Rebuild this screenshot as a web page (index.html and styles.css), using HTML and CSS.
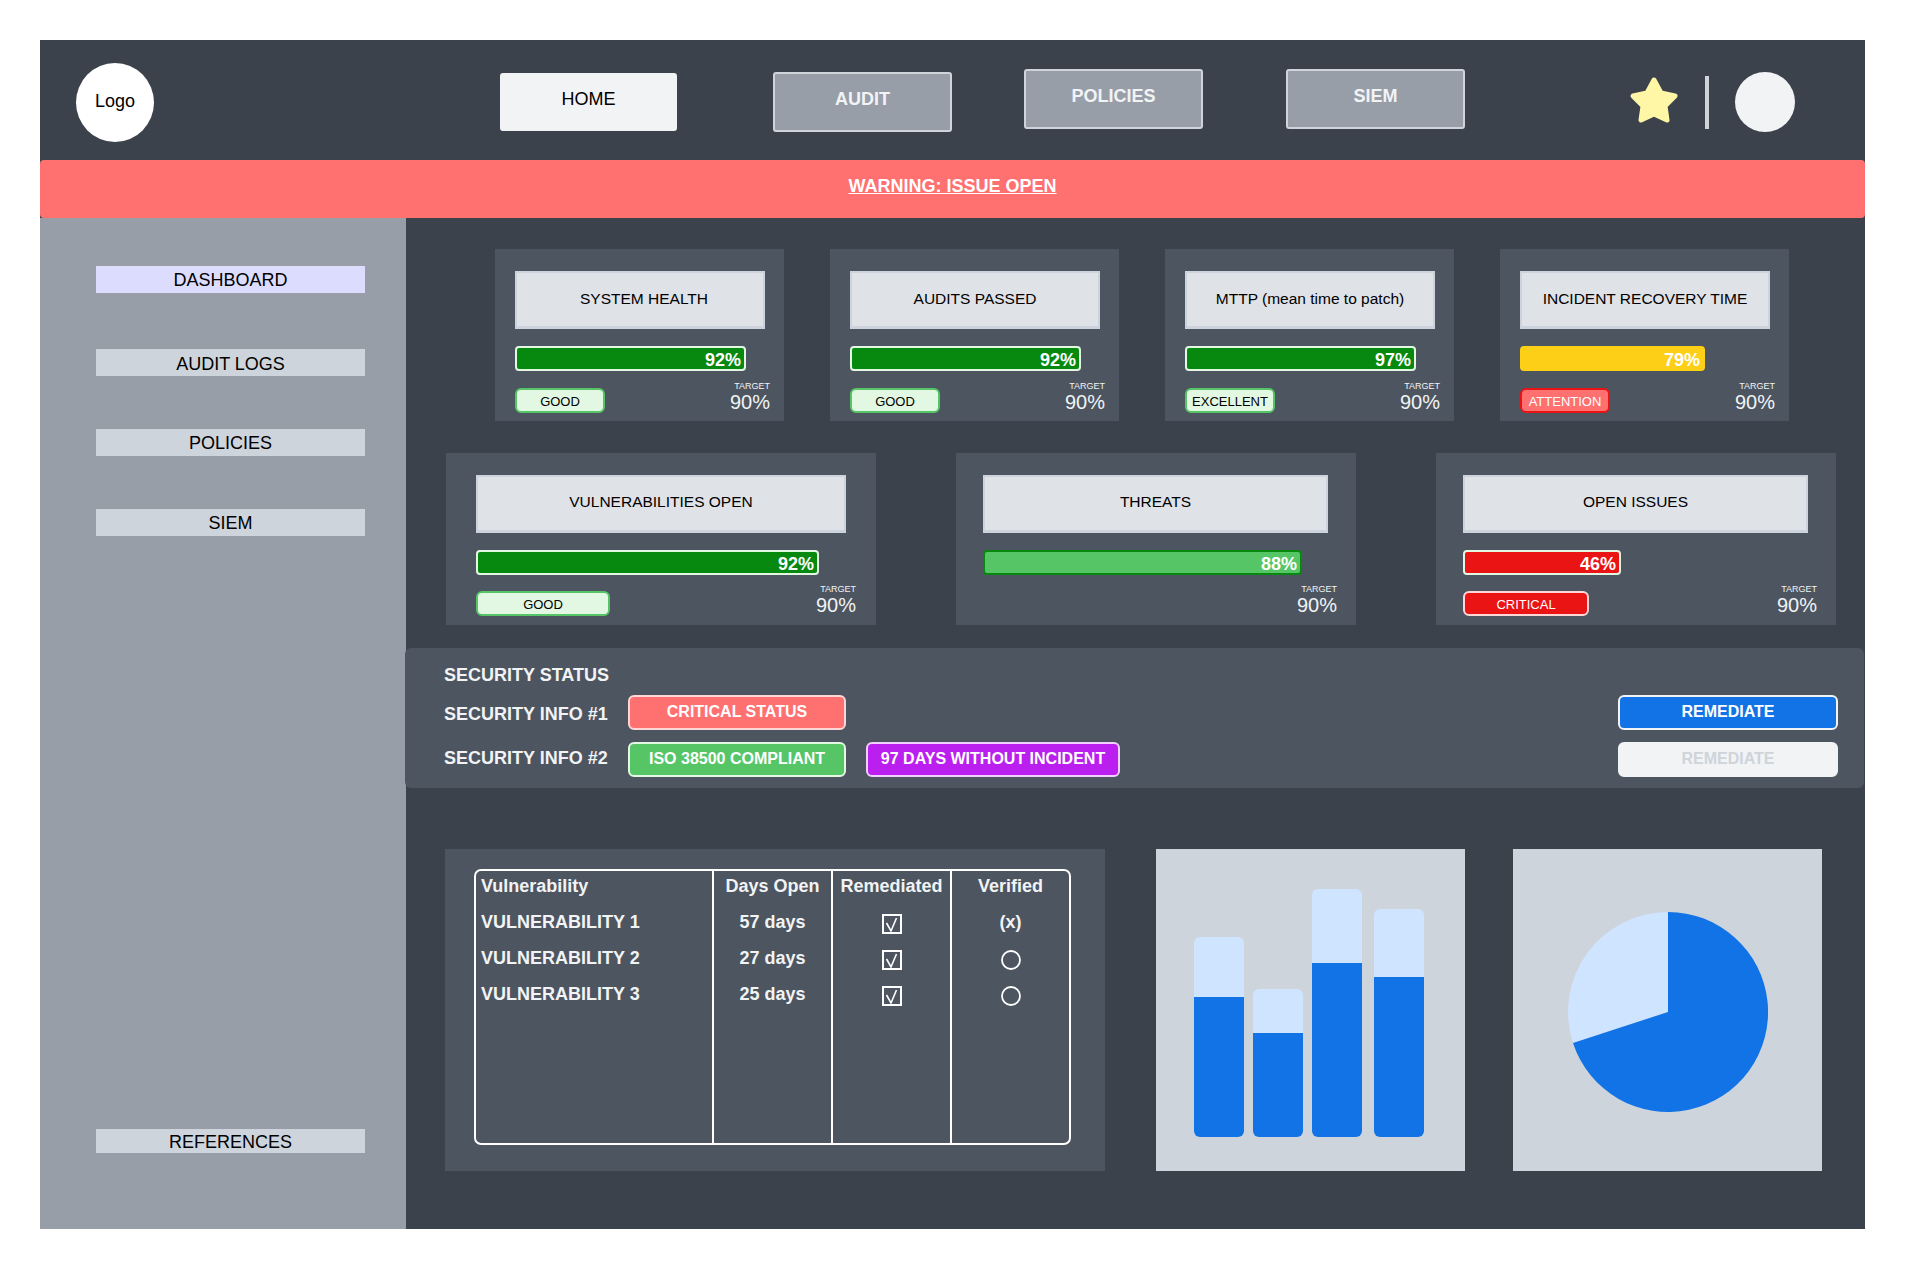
FILE: index.html
```html
<!DOCTYPE html>
<html lang="en">
<head>
  <meta charset="UTF-8">
  <meta name="viewport" content="width=device-width, initial-scale=1.0">
  <title>Security Dashboard</title>
  <link rel="stylesheet" href="styles.css">
</head>
<body>
  <div class="frame">
    <div class="header">
      <div class="logo">Logo</div>
      <a class="nav nav-home">HOME</a>
      <a class="nav nav-audit">AUDIT</a>
      <a class="nav nav-policies">POLICIES</a>
      <a class="nav nav-siem">SIEM</a>
      <svg class="star" width="50" height="48" viewBox="0 0 50 48">
        <polygon points="25,4 32,17 46,20 36,30 38,44 25,38 12,44 14,30 4,20 18,17" fill="#fff7a6" stroke="#fff7a6" stroke-width="5" stroke-linejoin="round"/>
      </svg>
      <div class="divider"></div>
      <div class="avatar"></div>
    </div>

    <div class="banner"><a>WARNING: ISSUE OPEN</a></div>

    <div class="main">
      <div class="sidebar">
        <a class="side-item side-active">DASHBOARD</a>
        <a class="side-item">AUDIT LOGS</a>
        <a class="side-item">POLICIES</a>
        <a class="side-item">SIEM</a>
        <a class="side-item side-refs">REFERENCES</a>
      </div>

      <div class="content">
        <div class="row-one">
          <div class="card">
            <div class="card-title title-system">SYSTEM HEALTH</div>
            <div class="bar bar-green" style="width: 231px">92%</div>
            <div class="card-foot">
              <span class="badge badge-good">GOOD</span>
              <div class="target"><small>TARGET</small>90%</div>
            </div>
          </div>
          <div class="card">
            <div class="card-title">AUDITS PASSED</div>
            <div class="bar bar-green" style="width: 231px">92%</div>
            <div class="card-foot">
              <span class="badge badge-good">GOOD</span>
              <div class="target"><small>TARGET</small>90%</div>
            </div>
          </div>
          <div class="card">
            <div class="card-title">MTTP (mean time to patch)</div>
            <div class="bar bar-green" style="width: 231px">97%</div>
            <div class="card-foot">
              <span class="badge badge-good">EXCELLENT</span>
              <div class="target"><small>TARGET</small>90%</div>
            </div>
          </div>
          <div class="card">
            <div class="card-title">INCIDENT RECOVERY TIME</div>
            <div class="bar bar-yellow" style="width: 185px">79%</div>
            <div class="card-foot">
              <span class="badge badge-attention">ATTENTION</span>
              <div class="target"><small>TARGET</small>90%</div>
            </div>
          </div>
        </div>

        <div class="row-two">
          <div class="card card-vuln">
            <div class="card-title">VULNERABILITIES OPEN</div>
            <div class="bar bar-green" style="width: 343px">92%</div>
            <div class="card-foot">
              <span class="badge badge-good badge-wide">GOOD</span>
              <div class="target"><small>TARGET</small>90%</div>
            </div>
          </div>
          <div class="card card-side">
            <div class="card-title">THREATS</div>
            <div class="bar bar-light" style="width: 319px">88%</div>
            <div class="card-foot card-foot-end">
              <div class="target"><small>TARGET</small>90%</div>
            </div>
          </div>
          <div class="card card-side">
            <div class="card-title">OPEN ISSUES</div>
            <div class="bar bar-red" style="width: 158px">46%</div>
            <div class="card-foot">
              <span class="badge badge-critical">CRITICAL</span>
              <div class="target"><small>TARGET</small>90%</div>
            </div>
          </div>
        </div>

        <div class="security">
          <div class="sec-heading">SECURITY STATUS</div>
          <div class="sec-row sec-row-one">
            <span class="sec-label">SECURITY INFO #1</span>
            <span class="pill pill-critical">CRITICAL STATUS</span>
            <button class="pill pill-blue">REMEDIATE</button>
          </div>
          <div class="sec-row sec-row-two">
            <span class="sec-label">SECURITY INFO #2</span>
            <span class="pill pill-green">ISO 38500 COMPLIANT</span>
            <span class="pill pill-purple">97 DAYS WITHOUT INCIDENT</span>
            <button class="pill pill-off">REMEDIATE</button>
          </div>
        </div>

        <div class="bottom">
          <div class="table-card">
            <table class="vuln-table">
              <tr class="head-row">
                <th class="first">Vulnerability</th>
                <th>Days Open</th>
                <th>Remediated</th>
                <th>Verified</th>
              </tr>
              <tr>
                <td class="first">VULNERABILITY 1</td>
                <td>57 days</td>
                <td><svg class="mark" width="20" height="20" viewBox="0 0 20 20"><rect x="1" y="1" width="18" height="18" fill="none" stroke="#fff" stroke-width="2"/><path d="M4.5 9 L9 17 L14.5 4" fill="none" stroke="#fff" stroke-width="1.6"/></svg></td>
                <td>(x)</td>
              </tr>
              <tr>
                <td class="first">VULNERABILITY 2</td>
                <td>27 days</td>
                <td><svg class="mark" width="20" height="20" viewBox="0 0 20 20"><rect x="1" y="1" width="18" height="18" fill="none" stroke="#fff" stroke-width="2"/><path d="M4.5 9 L9 17 L14.5 4" fill="none" stroke="#fff" stroke-width="1.6"/></svg></td>
                <td><svg class="mark" width="20" height="20" viewBox="0 0 20 20"><circle cx="10" cy="10" r="9" fill="none" stroke="#fff" stroke-width="1.8"/></svg></td>
              </tr>
              <tr>
                <td class="first">VULNERABILITY 3</td>
                <td>25 days</td>
                <td><svg class="mark" width="20" height="20" viewBox="0 0 20 20"><rect x="1" y="1" width="18" height="18" fill="none" stroke="#fff" stroke-width="2"/><path d="M4.5 9 L9 17 L14.5 4" fill="none" stroke="#fff" stroke-width="1.6"/></svg></td>
                <td><svg class="mark" width="20" height="20" viewBox="0 0 20 20"><circle cx="10" cy="10" r="9" fill="none" stroke="#fff" stroke-width="1.8"/></svg></td>
              </tr>
              <tr class="filler-row">
                <td class="first"></td>
                <td></td>
                <td></td>
                <td></td>
              </tr>
            </table>
          </div>

          <div class="chart chart-bars">
            <div class="col">
              <div class="col-top" style="height: 60px"></div>
              <div class="col-fill" style="height: 140px"></div>
            </div>
            <div class="col">
              <div class="col-top" style="height: 44px"></div>
              <div class="col-fill" style="height: 104px"></div>
            </div>
            <div class="col">
              <div class="col-top" style="height: 74px"></div>
              <div class="col-fill" style="height: 174px"></div>
            </div>
            <div class="col col-last">
              <div class="col-top" style="height: 68px"></div>
              <div class="col-fill" style="height: 160px"></div>
            </div>
          </div>

          <div class="chart chart-pie">
            <svg width="200" height="200" viewBox="0 0 200 200">
              <path d="M100 100 L100 0 A100 100 0 0 0 5 131 Z" fill="#cfe4ff"/>
              <path d="M100 100 L100 0 A100 100 0 1 1 5 131 Z" fill="#1273e6"/>
            </svg>
          </div>
        </div>
      </div>
    </div>
  </div>
</body>
</html>
```

FILE: styles.css
```css
* {
  box-sizing: border-box;
}
body {
  margin: 0;
  background: #fff;
  font-family: "Liberation Sans", Arial, sans-serif;
}
.frame {
  width: 1825px;
  height: 1189px;
  margin: 40px 0 0 40px;
  background: #3c424c;
  display: flex;
  flex-direction: column;
}

/* top bar */
.header {
  height: 120px;
  display: flex;
  align-items: flex-start;
  flex-shrink: 0;
}
.logo {
  width: 78px;
  height: 79px;
  margin: 23px 0 0 36px;
  border-radius: 50%;
  background: #fff;
  color: #000;
  font-size: 18px;
  display: flex;
  align-items: center;
  justify-content: center;
  padding-bottom: 2px;
}
.nav {
  width: 179px;
  height: 60px;
  font-size: 18px;
  font-weight: bold;
  color: #f1f3f5;
  background: #989ea8;
  border: 2px solid #ced4da;
  border-radius: 3px;
  display: flex;
  align-items: center;
  justify-content: center;
  padding-bottom: 6px;
}
.nav-home {
  width: 177px;
  height: 58px;
  margin: 33px 0 0 346px;
  background: #f1f3f5;
  border: none;
  color: #000;
  font-weight: normal;
}
.nav-audit {
  margin: 32px 0 0 96px;
}
.nav-policies {
  margin: 29px 0 0 72px;
}
.nav-siem {
  margin: 29px 0 0 83px;
}
.star {
  margin: 36px 0 0 164px;
}
.divider {
  width: 4px;
  height: 53px;
  margin: 36px 0 0 26px;
  background: #ced4da;
}
.avatar {
  width: 60px;
  height: 60px;
  margin: 32px 0 0 26px;
  border-radius: 50%;
  background: #f1f3f5;
}

.banner {
  height: 58px;
  flex-shrink: 0;
  background: #ff7070;
  border-radius: 4px;
  color: #fff;
  font-size: 18px;
  font-weight: bold;
  display: flex;
  align-items: center;
  justify-content: center;
  padding-bottom: 5px;
}
.banner a {
  text-decoration: underline;
}

.main {
  flex: 1;
  display: flex;
}

/* left side */
.sidebar {
  width: 366px;
  background: #989ea8;
  padding: 48px 0 75px 56px;
  display: flex;
  flex-direction: column;
}
.side-item {
  width: 269px;
  height: 27px;
  margin-bottom: 56px;
  background: #ced4dc;
  color: #000;
  font-size: 18px;
  text-align: center;
  line-height: 29px;
}
.side-item:nth-child(2), .side-item:nth-child(3) {
  margin-bottom: 53px;
}
.side-item:nth-child(2) {
  line-height: 30px;
}
.side-active {
  background: #dcdcff;
}
.side-refs {
  height: 24px;
  margin: auto 0 1px 0;
  line-height: 27px;
}

.content {
  flex: 1;
  padding-top: 31px;
}

/* cards */
.row-one {
  display: flex;
  gap: 46px;
  margin-left: 89px;
}
.row-two {
  display: flex;
  gap: 80px;
  margin: 32px 0 0 40px;
}
.card {
  width: 289px;
  height: 172px;
  padding: 22px 14px 0 20px;
  background: #4d5560;
}
.card-vuln {
  width: 430px;
  padding-left: 30px;
  padding-right: 20px;
}
.card-side {
  width: 400px;
  padding-left: 27px;
  padding-right: 19px;
}
.card-title {
  height: 58px;
  width: 250px;
  background: #dfe2e7;
  border: 2px solid #cdd3dc;
  border-width: 2px 2px 3px 2px;
  color: #000;
  font-size: 15.5px;
  display: flex;
  align-items: center;
  justify-content: center;
  padding-bottom: 2px;
}
.card-vuln .card-title {
  width: 370px;
  padding-bottom: 3px;
}
.card-side .card-title {
  width: 345px;
  padding-bottom: 3px;
}
.title-system {
  padding-left: 8px;
}
.bar {
  height: 25px;
  margin-top: 17px;
  padding-right: 3px;
  border: 2px solid #e3f8e3;
  border-radius: 4px;
  color: #fff;
  font-size: 18px;
  font-weight: bold;
  text-align: right;
  line-height: 25px;
}
.bar-green {
  background: #06890e;
}
.bar-light {
  background: #55c566;
  border-color: #06890e;
}
.bar-yellow {
  background: #fdd017;
  border-color: #fdd017;
}
.bar-red {
  background: #ea1414;
}
.card-foot {
  margin-top: 10px;
  height: 32px;
  display: flex;
  justify-content: space-between;
  align-items: flex-end;
}
.card-foot-end {
  justify-content: flex-end;
}
.card-vuln .card-foot, .card-side .card-foot {
  margin-top: 9px;
}
.badge {
  width: 90px;
  height: 25px;
  border: 2px solid;
  border-radius: 6px;
  font-size: 13px;
  display: flex;
  align-items: center;
  justify-content: center;
  padding-top: 2px;
}
.badge-wide {
  width: 134px;
}
.badge-good {
  background: #e3f8e3;
  border-color: #55c566;
  color: #000;
}
.badge-attention {
  background: #ff7070;
  border-color: #ea1414;
  color: #fff;
}
.badge-critical {
  width: 126px;
  background: #ea1414;
  border-color: #ffd6d6;
  color: #fff;
}
.target {
  color: #f1f3f5;
  font-size: 20px;
  line-height: 22px;
  text-align: right;
}
.target small {
  display: block;
  font-size: 9px;
  line-height: 10px;
}

/* security panel */
.security {
  height: 140px;
  margin: 23px 1px 0 -1px;
  padding: 16px 26px 0 39px;
  background: #4d5560;
  border-radius: 6px;
  color: #f1f3f5;
  font-weight: bold;
}
.sec-heading {
  font-size: 18px;
  line-height: 22px;
}
.sec-row {
  display: flex;
  align-items: center;
  height: 35px;
}
.sec-row-one {
  margin-top: 9px;
}
.sec-row-two {
  margin-top: 12px;
}
.sec-row-one .sec-label {
  padding-top: 3px;
}
.sec-row-two .sec-label {
  padding-bottom: 3px;
}
.sec-label {
  width: 184px;
  font-size: 18px;
}
.pill {
  width: 218px;
  height: 35px;
  border: 2px solid #f1f3f5;
  border-radius: 6px;
  color: #fff;
  font-family: inherit;
  font-size: 16px;
  font-weight: bold;
  display: flex;
  align-items: center;
  justify-content: center;
  padding-bottom: 2px;
}
.pill-critical {
  background: #ff7070;
  border-color: #ffd6d6;
}
.pill-green {
  background: #55c566;
  border-color: #e3f8e3;
  padding-bottom: 1px;
}
.pill-purple {
  width: 254px;
  margin-left: 20px;
  background: #bb1ff0;
  border-color: #f1d0ff;
  padding-bottom: 1px;
}
.pill-blue {
  width: 220px;
  margin-left: auto;
  background: #1273e6;
}
.pill-off {
  width: 220px;
  margin-left: auto;
  background: #f1f3f5;
  color: #ced4da;
}

/* bottom row */
.bottom {
  display: flex;
  margin: 61px 0 0 39px;
}
.table-card {
  width: 660px;
  height: 322px;
  padding: 20px 0 0 29px;
  background: #4d5560;
}
.vuln-table {
  width: 597px;
  height: 276px;
  table-layout: fixed;
  border: 2px solid #fff;
  border-radius: 7px;
  border-spacing: 0;
  color: #f1f3f5;
  font-size: 18px;
  font-weight: bold;
}
.vuln-table th, .vuln-table td {
  border-left: 2px solid #fff;
  padding: 0;
  text-align: center;
}
.vuln-table .first {
  width: 236px;
  border-left: none;
  padding-left: 5px;
  text-align: left;
}
.head-row th {
  height: 33px;
  padding-bottom: 3px;
}
.vuln-table td {
  height: 36px;
}
.vuln-table .filler-row td {
  height: auto;
}
.mark {
  display: block;
  margin: 4px auto 0;
}
.chart {
  width: 309px;
  height: 322px;
  background: #cdd4dc;
}
.chart-bars {
  margin-left: 51px;
  padding: 0 0 34px 38px;
  display: flex;
  align-items: flex-end;
  gap: 9px;
}
.col {
  width: 50px;
  border-radius: 6px;
  overflow: hidden;
}
.col-last {
  margin-left: 3px;
}
.col-top {
  background: #cfe4ff;
}
.col-fill {
  background: #1273e6;
}
.chart-pie {
  margin-left: 48px;
  padding: 63px 0 0 55px;
}
```
